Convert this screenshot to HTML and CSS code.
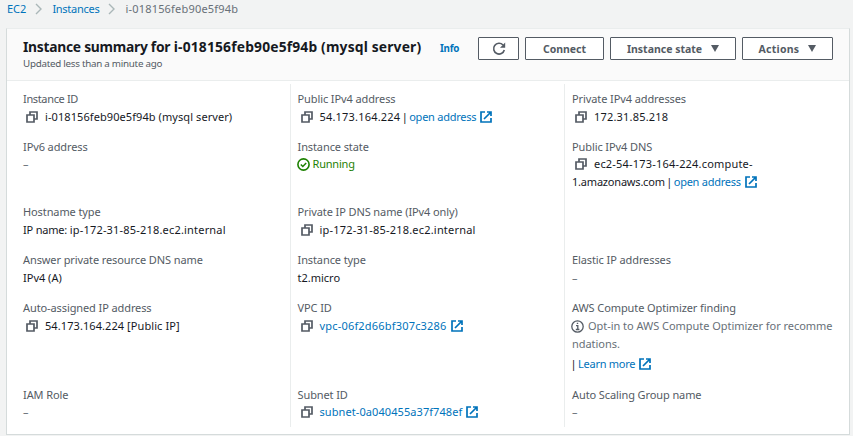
FILE: index.html
```html
<!DOCTYPE html>
<html lang="en">
<head>
<meta charset="utf-8">
<title>Instance summary</title>
<link rel="stylesheet" href="styles.css">
</head>
<body>
<svg class="defs" aria-hidden="true">
  <symbol id="copy" viewBox="0 0 12 12"><path d="M1 4h7v7H1zM4 4V1h7v7H8" fill="none" stroke="#545b64" stroke-width="1.7"/></symbol>
  <symbol id="ext" viewBox="0 0 12 12"><path d="M5 1H1v10h10V7M7 1h4v4M11 1L4 8" fill="none" stroke="#0073bb" stroke-width="1.7"/></symbol>
  <symbol id="sep" viewBox="0 0 7 12"><path d="M1 1l5 5-5 5" fill="none" stroke="#aab7b8" stroke-width="1.4"/></symbol>
</svg>
<nav class="crumbs">
  <a>EC2</a><svg class="sep"><use href="#sep"/></svg><a class="crumb-instances">Instances</a><svg class="sep"><use href="#sep"/></svg><span class="wide">i-018156feb90e5f94b</span>
</nav>
<main class="panel">
  <header class="head">
    <div class="titles">
      <h1><span class="title-lead">Instance summary for</span> <span class="title-id">i-018156feb90e5f94b (mysql server)</span></h1>
      <p>Updated less than a minute ago</p>
    </div>
    <a class="info">Info</a>
    <div class="actions">
      <button class="btn refresh" aria-label="Refresh"><svg width="14" height="14" viewBox="0 0 14 14"><path d="M11 3A5.4 5.4 0 1 0 12.3 8" fill="none" stroke="#545b64" stroke-width="1.6"/><path d="M13.2 .6v5.2H8z" fill="#545b64"/></svg></button>
      <button class="btn connect">Connect</button>
      <button class="btn state">Instance state<i class="caret"></i></button>
      <button class="btn act">Actions<i class="caret"></i></button>
    </div>
  </header>
  <section class="grid">
    <div class="cell"><div class="label narrow">Instance ID</div><div class="value mid"><svg class="copy"><use href="#copy"/></svg>i-018156feb90e5f94b (mysql server)</div></div>
    <div class="cell"><div class="label">Public IPv4 address</div><div class="value"><svg class="copy"><use href="#copy"/></svg><span class="wide">54.173.164.224</span><span class="bar">|</span><a>open address<svg class="ext"><use href="#ext"/></svg></a></div></div>
    <div class="cell"><div class="label">Private IPv4 addresses</div><div class="value wide"><svg class="copy"><use href="#copy"/></svg>172.31.85.218</div></div>

    <div class="cell"><div class="label">IPv6 address</div><div class="value raised muted">–</div></div>
    <div class="cell"><div class="label">Instance state</div><div class="value raised running"><svg class="status" viewBox="0 0 13 13"><circle cx="6.5" cy="6.5" r="5.6" fill="none" stroke="#1d8102" stroke-width="1.6"/><path d="M3.8 6.5l2 2 3.4-3.6" fill="none" stroke="#1d8102" stroke-width="1.5"/></svg>Running</div></div>
    <div class="cell"><div class="label">Public IPv4 DNS</div><div class="value raised"><svg class="copy"><use href="#copy"/></svg><span class="wide">ec2-54-173-164-224.compute-</span><br><span class="host">1.amazonaws.com</span><span class="bar">|</span><a>open address<svg class="ext"><use href="#ext"/></svg></a></div></div>

    <div class="cell"><div class="label">Hostname type</div><div class="value"><span class="lead">IP name: </span><span class="wide">ip-172-31-85-218.ec2.internal</span></div></div>
    <div class="cell"><div class="label">Private IP DNS name (IPv4 only)</div><div class="value wide"><svg class="copy"><use href="#copy"/></svg>ip-172-31-85-218.ec2.internal</div></div>
    <div class="cell"></div>

    <div class="cell"><div class="label">Answer private resource DNS name</div><div class="value">IPv4 (A)</div></div>
    <div class="cell"><div class="label">Instance type</div><div class="value">t2.micro</div></div>
    <div class="cell"><div class="label">Elastic IP addresses</div><div class="value muted">–</div></div>

    <div class="cell"><div class="label">Auto-assigned IP address</div><div class="value mid"><svg class="copy"><use href="#copy"/></svg>54.173.164.224 [Public IP]</div></div>
    <div class="cell"><div class="label">VPC ID</div><div class="value"><svg class="copy"><use href="#copy"/></svg><a class="wide">vpc-06f2d66bf307c3286<svg class="ext"><use href="#ext"/></svg></a></div></div>
    <div class="cell"><div class="label">AWS Compute Optimizer finding</div><div class="value optin"><svg class="status" viewBox="0 0 13 13"><circle cx="6.5" cy="6.5" r="5.7" fill="none" stroke="#545b64" stroke-width="1.3"/><path d="M5 5.6h1.8v4M4.8 9.5h3.6M5.8 3.4h1.4" fill="none" stroke="#545b64" stroke-width="1.3"/></svg>Opt-in to AWS Compute Optimizer for recomme<br>ndations.</div><div class="value learn"><span class="bar bar-first">|</span><a>Learn more<svg class="ext"><use href="#ext"/></svg></a></div></div>

    <div class="cell"><div class="label">IAM Role</div><div class="value raised muted">–</div></div>
    <div class="cell"><div class="label">Subnet ID</div><div class="value raised"><svg class="copy"><use href="#copy"/></svg><a class="mid">subnet-0a040455a37f748ef<svg class="ext"><use href="#ext"/></svg></a></div></div>
    <div class="cell"><div class="label">Auto Scaling Group name</div><div class="value raised muted">–</div></div>
  </section>
</main>
</body>
</html>
```
FILE: styles.css
```css
* { box-sizing: border-box; }
body {
  margin: 0;
  height: 436px;
  overflow: hidden;
  background: #f2f3f3;
  color: #16191f;
  font: 11px/18px "Noto Sans", "Open Sans", sans-serif;
}
.defs { display: block; width: 0; height: 0; }
a { color: #0073bb; }

.crumbs {
  display: flex;
  align-items: center;
  height: 28px;
  padding: 0 0 10px 7px;
  color: #687078;
}
.crumb-instances { letter-spacing: -0.27px; }
.sep { width: 7px; height: 12px; margin: 0 10px 0 9px; }

.panel {
  width: 844px;
  height: 407px;
  margin-left: 6px;
  border: 1px solid #d5dbdb;
  border-top-color: #eaeded;
  background: #fff;
}
.head {
  display: flex;
  align-items: flex-start;
  height: 52px;
  padding: 8px 16px 0;
  border-bottom: 1px solid #eaeded;
  background: #fafafa;
}
.titles { width: 417px; white-space: nowrap; }
h1 { margin: 0; font-size: 13.83px; line-height: 20px; font-weight: 700; }
.title-lead { letter-spacing: -0.27px; }
.title-id { letter-spacing: 0.17px; }
p { margin: -1px 0 0; color: #545b64; font-size: 9.8px; line-height: 16px; letter-spacing: -0.26px; }
.info { font-size: 9.8px; line-height: 23px; font-weight: 700; letter-spacing: -0.25px; }
.actions { display: flex; margin-left: auto; }
.btn {
  display: flex;
  align-items: center;
  justify-content: center;
  height: 23px;
  padding: 0;
  border: 1px solid #545b64;
  border-radius: 1px;
  background: #fff;
  color: #545b64;
  font: 700 10.5px/20px "Noto Sans", "Open Sans", sans-serif;
}
.refresh { width: 41px; margin-right: 6px; }
.connect { width: 79px; margin-right: 6px; }
.state { width: 126px; margin-right: 6px; }
.act { width: 91px; letter-spacing: 0.25px; }
.caret {
  margin-left: 9px;
  border: 4.5px solid transparent;
  border-top: 7px solid #545b64;
  border-bottom: 0;
}

.grid {
  display: grid;
  grid-template-columns: 267px 275px 1fr;
  grid-template-rows: 48px 65px 48px 48px 87px 47px;
  padding: 3px 0 0 16px;
}
.cell { padding-top: 6px; white-space: nowrap; }
.cell:nth-child(3n+2) { padding-left: 6.5px; border-left: 1px solid #eaeded; border-right: 1px solid #eaeded; }
.cell:nth-child(3n) { padding-left: 7px; }
.label { color: #545b64; letter-spacing: -0.1px; }
.narrow { letter-spacing: -0.35px; }
.value { height: 18px; }
.value a { letter-spacing: -0.25px; }
.raised { margin-top: -1px; }
.mid, .value a.mid { letter-spacing: 0.08px; }
.wide, .value a.wide { letter-spacing: 0.19px; }
.lead { letter-spacing: -0.2px; }
.host { letter-spacing: -0.2px; }
.bar { display: inline-block; width: 9px; text-align: center; }
.bar-first { width: 6px; text-align: left; text-indent: -1.5px; }
.muted { color: #687078; }
.running { color: #1d8102; letter-spacing: -0.2px; }
.optin { height: 36px; color: #687078; letter-spacing: -0.04px; }
.learn { margin-top: 2px; }
.copy { width: 12px; height: 12px; margin: 0 7px 0 3px; vertical-align: -2px; }
.ext { width: 12px; height: 12px; margin-left: 4px; vertical-align: -2px; }
.status { width: 13px; height: 13px; margin: 0 4px 0 -1px; vertical-align: -3px; }
.running .status { margin-right: 3px; }
```
